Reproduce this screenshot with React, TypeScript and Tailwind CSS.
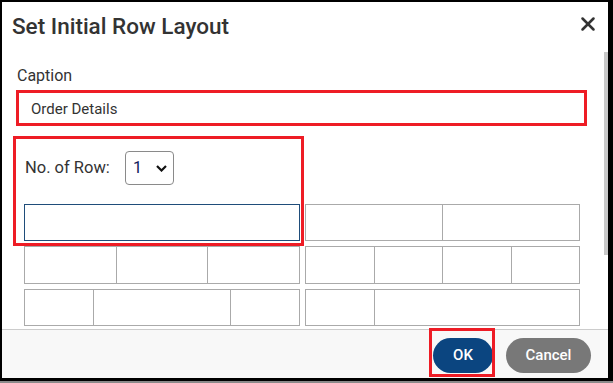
import { X } from 'lucide-react'

// cell layouts for the two preview panels, widths as flex ratios
const leftRows = [[1, 1, 1], [1, 2, 1]]
const rightRows = [[1, 1], [1, 1, 1, 1], [1, 3]]

function Row({ cells, h }: { cells: number[]; h: string }) {
  return (
    <div className={`flex border border-[#aaaaaa] ${h}`}>
      {cells.map((c, i) => (
        <div
          key={i}
          style={{ flexGrow: c, flexBasis: 0 }}
          className={i > 0 ? 'border-l border-[#aaaaaa]' : ''}
        />
      ))}
    </div>
  )
}

export default function App() {
  return (
    <div
      className="relative w-[613px] h-[383px] bg-black overflow-hidden"
      style={{ fontFamily: 'Roboto, "Liberation Sans", sans-serif' }}
    >
      <div className="absolute left-0 right-0 bottom-0 h-[2px] bg-[#8a8a8a]" />

      {/* Dialog */}
      <div className="ml-[2px] mt-[2px] w-[606px] h-[376px] bg-white flex flex-col">
        {/* Header */}
        <div className="h-[48px] flex items-start justify-between pl-[10px] pr-[9px] pt-[11px]">
          <h1 className="text-[22.5px] leading-[26px] font-medium text-[#333333]">Set Initial Row Layout</h1>
          <X size={22} strokeWidth={2.8} className="text-[#333333] mt-[0px]" />
        </div>

        {/* Body */}
        <div className="flex-1 flex overflow-hidden">
          <div className="flex-1 pl-[14px] pr-[17px]">
            <p className="mt-[16px] pl-[1px] text-[16px] leading-[19px] text-[#333333]">Caption</p>
            <div className="mt-[5px] h-[36px] border-[3px] border-[#ee1c25] flex items-center pl-[12px] pt-[2px]">
              <span className="text-[15px] text-[#333333]">Order Details</span>
            </div>

            <div className="ml-[8px] mt-[25px] flex items-center h-[34px]">
              <span className="w-[101px] pl-[1px] text-[16.5px] text-[#333333]">No. of Row:</span>
              <div className="w-[49px] h-[34px] border border-[#8a8a8a] rounded-[4px] flex items-center justify-between pl-[7px] pr-[6px]">
                <span className="text-[16px] text-[#10205a]">1</span>
                <svg width="11" height="7" viewBox="0 0 11 7">
                  <path d="M1 1 L5.5 5.5 L10 1" fill="none" stroke="#111" strokeWidth="2.2" />
                </svg>
              </div>
            </div>

            {/* Layout previews */}
            <div className="ml-[8px] mt-[19px] flex gap-[5px]">
              <div className="w-[276px] flex flex-col gap-[5px]">
                <div className="h-[37px] border border-[#1f4d7a]" />
                <Row cells={leftRows[0]} h="h-[38px]" />
                <Row cells={leftRows[1]} h="h-[37px]" />
              </div>
              <div className="w-[275px] flex flex-col gap-[5px]">
                <Row cells={rightRows[0]} h="h-[37px]" />
                <Row cells={rightRows[1]} h="h-[38px]" />
                <Row cells={rightRows[2]} h="h-[37px]" />
              </div>
            </div>
          </div>
          <div className="w-[4px]">
            <div className="mt-[2px] h-[203px] bg-[#c8c8c8]" />
          </div>
        </div>

        {/* Footer */}
        <div className="h-[49px] border-t border-[#cccccc] bg-[#f8f8f8] flex justify-end items-start gap-[13px] pt-[8px] pr-[17px]">
          <button className="w-[60px] h-[35px] rounded-full bg-[#0b4580] text-white text-[15px] font-medium">OK</button>
          <button className="w-[85px] h-[35px] rounded-full bg-[#787878] text-white text-[15px] font-medium">Cancel</button>
        </div>
      </div>

      {/* annotation boxes */}
      <div className="absolute left-[13px] top-[136px] w-[291px] h-[110px] border-[3px] border-[#ee1c25]" />
      <div className="absolute left-[429px] top-[328px] w-[66px] h-[49px] border-[3px] border-[#ee1c25]" />
    </div>
  )
}
